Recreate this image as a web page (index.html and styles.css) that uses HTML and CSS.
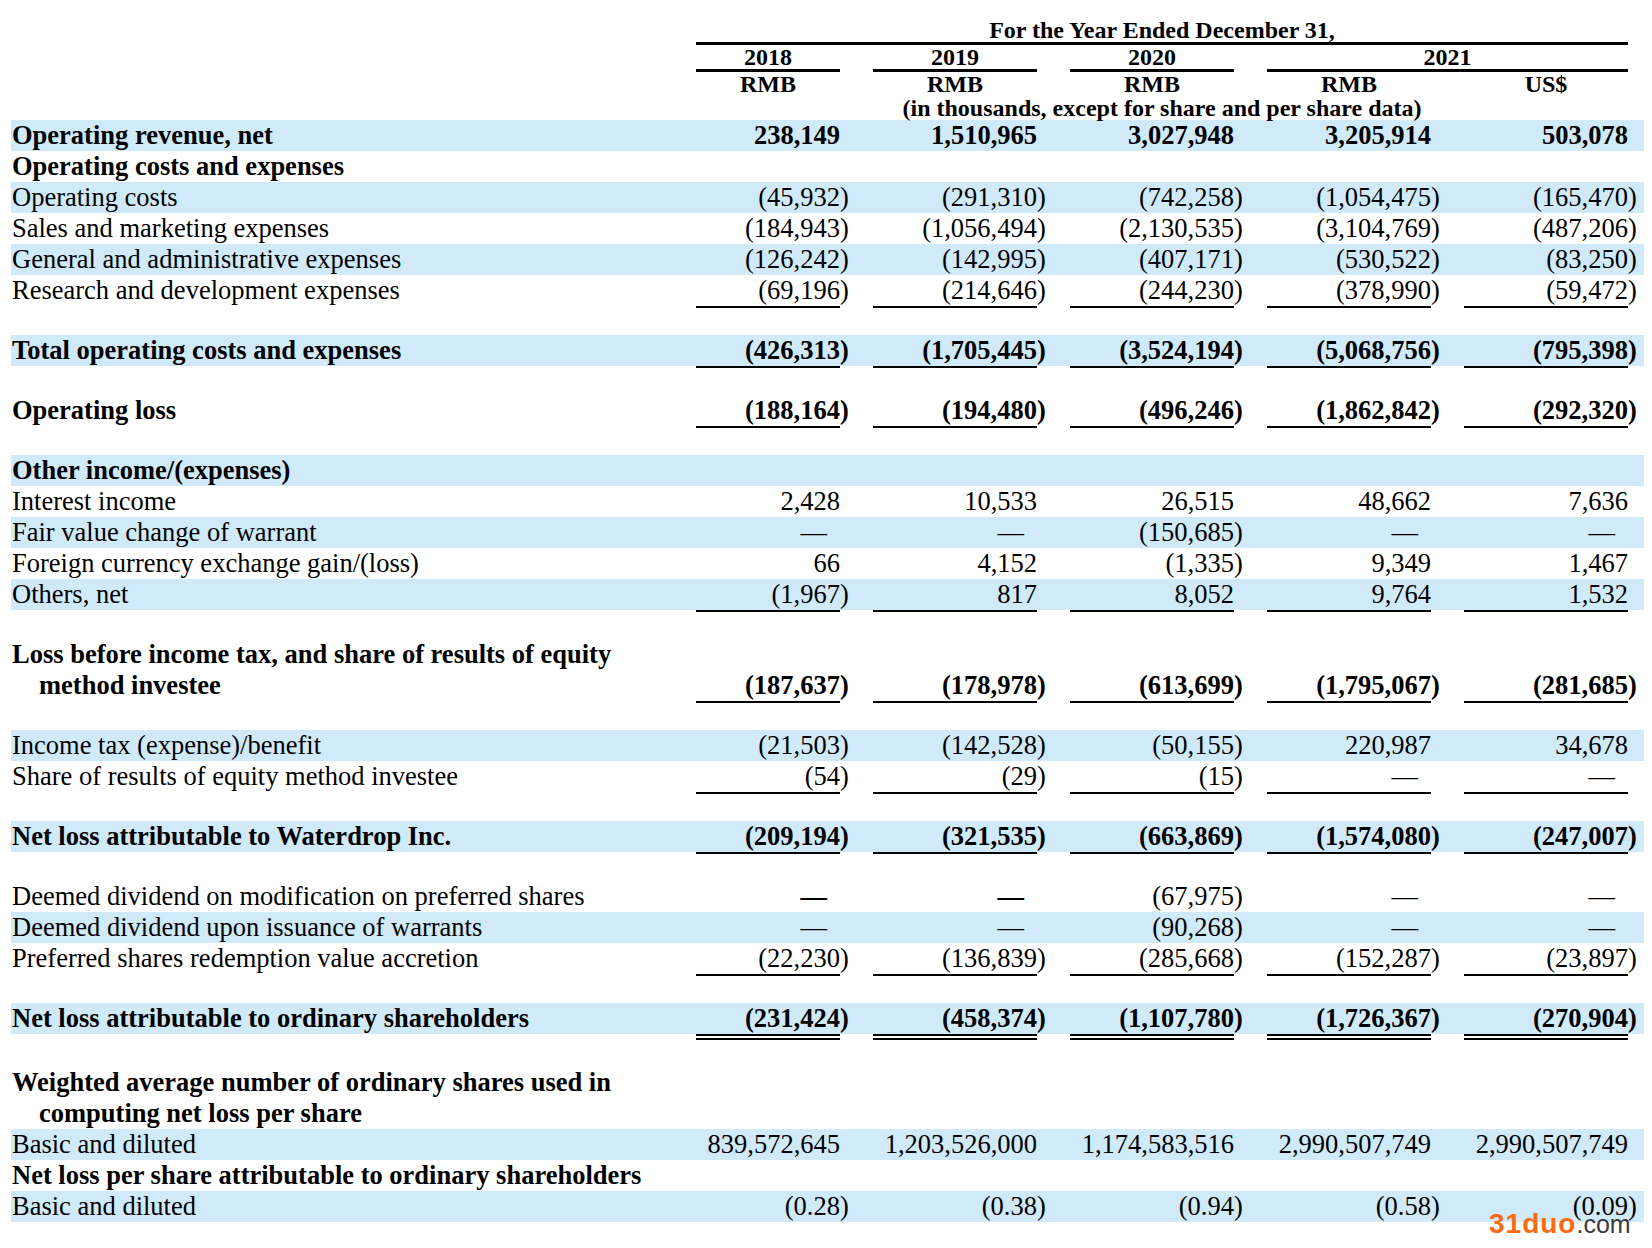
FILE: index.html
```html
<!DOCTYPE html>
<html>
<head>
<meta charset="utf-8">
<title>Statement of Operations</title>
<link rel="stylesheet" href="styles.css">
</head>
<body>
<div class="sheet">
  <div class="hd">
    <div class="hd-title">For the Year Ended December 31,</div>
    <div class="hd-year y1">2018</div>
    <div class="hd-year y2">2019</div>
    <div class="hd-year y3">2020</div>
    <div class="hd-year y45">2021</div>
    <div class="hd-cur k1">RMB</div>
    <div class="hd-cur k2">RMB</div>
    <div class="hd-cur k3">RMB</div>
    <div class="hd-cur k4">RMB</div>
    <div class="hd-cur k5">US$</div>
    <div class="hd-note">(in thousands, except for share and per share data)</div>
  </div>

  <div class="r blue b">
    <div class="lab">Operating revenue, net</div>
    <div class="v">238,149</div><div class="v">1,510,965</div><div class="v">3,027,948</div><div class="v">3,205,914</div><div class="v">503,078</div>
  </div>
  <div class="r b">
    <div class="lab">Operating costs and expenses</div>
    <div class="v"></div><div class="v"></div><div class="v"></div><div class="v"></div><div class="v"></div>
  </div>
  <div class="r blue">
    <div class="lab">Operating costs</div>
    <div class="v">(45,932<span class="cp">)</span></div><div class="v">(291,310<span class="cp">)</span></div><div class="v">(742,258<span class="cp">)</span></div><div class="v">(1,054,475<span class="cp">)</span></div><div class="v">(165,470<span class="cp">)</span></div>
  </div>
  <div class="r">
    <div class="lab">Sales and marketing expenses</div>
    <div class="v">(184,943<span class="cp">)</span></div><div class="v">(1,056,494<span class="cp">)</span></div><div class="v">(2,130,535<span class="cp">)</span></div><div class="v">(3,104,769<span class="cp">)</span></div><div class="v">(487,206<span class="cp">)</span></div>
  </div>
  <div class="r blue">
    <div class="lab">General and administrative expenses</div>
    <div class="v">(126,242<span class="cp">)</span></div><div class="v">(142,995<span class="cp">)</span></div><div class="v">(407,171<span class="cp">)</span></div><div class="v">(530,522<span class="cp">)</span></div><div class="v">(83,250<span class="cp">)</span></div>
  </div>
  <div class="r u">
    <div class="lab">Research and development expenses</div>
    <div class="v">(69,196<span class="cp">)</span></div><div class="v">(214,646<span class="cp">)</span></div><div class="v">(244,230<span class="cp">)</span></div><div class="v">(378,990<span class="cp">)</span></div><div class="v">(59,472<span class="cp">)</span></div>
  </div>
  <div class="sp"></div>
  <div class="r blue b u">
    <div class="lab">Total operating costs and expenses</div>
    <div class="v">(426,313<span class="cp">)</span></div><div class="v">(1,705,445<span class="cp">)</span></div><div class="v">(3,524,194<span class="cp">)</span></div><div class="v">(5,068,756<span class="cp">)</span></div><div class="v">(795,398<span class="cp">)</span></div>
  </div>
  <div class="sp"></div>
  <div class="r b u">
    <div class="lab">Operating loss</div>
    <div class="v">(188,164<span class="cp">)</span></div><div class="v">(194,480<span class="cp">)</span></div><div class="v">(496,246<span class="cp">)</span></div><div class="v">(1,862,842<span class="cp">)</span></div><div class="v">(292,320<span class="cp">)</span></div>
  </div>
  <div class="sp"></div>
  <div class="r blue b">
    <div class="lab">Other income/(expenses)</div>
    <div class="v"></div><div class="v"></div><div class="v"></div><div class="v"></div><div class="v"></div>
  </div>
  <div class="r">
    <div class="lab">Interest income</div>
    <div class="v">2,428</div><div class="v">10,533</div><div class="v">26,515</div><div class="v">48,662</div><div class="v">7,636</div>
  </div>
  <div class="r blue">
    <div class="lab">Fair value change of warrant</div>
    <div class="v"><span class="d">—</span></div><div class="v"><span class="d">—</span></div><div class="v">(150,685<span class="cp">)</span></div><div class="v"><span class="d">—</span></div><div class="v"><span class="d">—</span></div>
  </div>
  <div class="r">
    <div class="lab">Foreign currency exchange gain/(loss)</div>
    <div class="v">66</div><div class="v">4,152</div><div class="v">(1,335<span class="cp">)</span></div><div class="v">9,349</div><div class="v">1,467</div>
  </div>
  <div class="r blue u">
    <div class="lab">Others, net</div>
    <div class="v">(1,967<span class="cp">)</span></div><div class="v">817</div><div class="v">8,052</div><div class="v">9,764</div><div class="v">1,532</div>
  </div>
  <div class="sp"></div>
  <div class="r two b u">
    <div class="lab hang">Loss before income tax, and share of results of equity<br>method investee</div>
    <div class="v">(187,637<span class="cp">)</span></div><div class="v">(178,978<span class="cp">)</span></div><div class="v">(613,699<span class="cp">)</span></div><div class="v">(1,795,067<span class="cp">)</span></div><div class="v">(281,685<span class="cp">)</span></div>
  </div>
  <div class="sp"></div>
  <div class="r blue">
    <div class="lab">Income tax (expense)/benefit</div>
    <div class="v">(21,503<span class="cp">)</span></div><div class="v">(142,528<span class="cp">)</span></div><div class="v">(50,155<span class="cp">)</span></div><div class="v">220,987</div><div class="v">34,678</div>
  </div>
  <div class="r u">
    <div class="lab">Share of results of equity method investee</div>
    <div class="v">(54<span class="cp">)</span></div><div class="v">(29<span class="cp">)</span></div><div class="v">(15<span class="cp">)</span></div><div class="v"><span class="d">—</span></div><div class="v"><span class="d">—</span></div>
  </div>
  <div class="sp"></div>
  <div class="r blue b u">
    <div class="lab">Net loss attributable to Waterdrop Inc.</div>
    <div class="v">(209,194<span class="cp">)</span></div><div class="v">(321,535<span class="cp">)</span></div><div class="v">(663,869<span class="cp">)</span></div><div class="v">(1,574,080<span class="cp">)</span></div><div class="v">(247,007<span class="cp">)</span></div>
  </div>
  <div class="sp"></div>
  <div class="r">
    <div class="lab">Deemed dividend on modification on preferred shares</div>
    <div class="v"><span class="d db">—</span></div><div class="v"><span class="d db">—</span></div><div class="v">(67,975<span class="cp">)</span></div><div class="v"><span class="d">—</span></div><div class="v"><span class="d">—</span></div>
  </div>
  <div class="r blue">
    <div class="lab">Deemed dividend upon issuance of warrants</div>
    <div class="v"><span class="d">—</span></div><div class="v"><span class="d">—</span></div><div class="v">(90,268<span class="cp">)</span></div><div class="v"><span class="d">—</span></div><div class="v"><span class="d">—</span></div>
  </div>
  <div class="r u">
    <div class="lab">Preferred shares redemption value accretion</div>
    <div class="v">(22,230<span class="cp">)</span></div><div class="v">(136,839<span class="cp">)</span></div><div class="v">(285,668<span class="cp">)</span></div><div class="v">(152,287<span class="cp">)</span></div><div class="v">(23,897<span class="cp">)</span></div>
  </div>
  <div class="sp"></div>
  <div class="r blue b uu">
    <div class="lab">Net loss attributable to ordinary shareholders</div>
    <div class="v">(231,424<span class="cp">)</span></div><div class="v">(458,374<span class="cp">)</span></div><div class="v">(1,107,780<span class="cp">)</span></div><div class="v">(1,726,367<span class="cp">)</span></div><div class="v">(270,904<span class="cp">)</span></div>
  </div>
  <div class="sp last"></div>
  <div class="r two b">
    <div class="lab hang">Weighted average number of ordinary shares used in<br>computing net loss per share</div>
    <div class="v"></div><div class="v"></div><div class="v"></div><div class="v"></div><div class="v"></div>
  </div>
  <div class="r blue">
    <div class="lab">Basic and diluted</div>
    <div class="v">839,572,645</div><div class="v">1,203,526,000</div><div class="v">1,174,583,516</div><div class="v">2,990,507,749</div><div class="v">2,990,507,749</div>
  </div>
  <div class="r b">
    <div class="lab">Net loss per share attributable to ordinary shareholders</div>
    <div class="v"></div><div class="v"></div><div class="v"></div><div class="v"></div><div class="v"></div>
  </div>
  <div class="r blue">
    <div class="lab">Basic and diluted</div>
    <div class="v">(0.28<span class="cp">)</span></div><div class="v">(0.38<span class="cp">)</span></div><div class="v">(0.94<span class="cp">)</span></div><div class="v">(0.58<span class="cp">)</span></div><div class="v">(0.09<span class="cp">)</span></div>
  </div>
</div>
<div class="wm"><span class="wm-a">31duo</span><span class="wm-b">.com</span></div>
</body>
</html>
```

FILE: styles.css
```css
* {
  box-sizing: border-box;
  margin: 0;
  padding: 0;
}

html, body {
  background: #ffffff;
}

body {
  margin: 0;
  color: #000000;
  font-family: "Liberation Serif", "Times New Roman", serif;
  position: relative;
  min-height: 1248px;
}

.sheet {
  padding-left: 11px;
  width: 1644px;
}

.hd,
.r {
  display: grid;
  grid-template-columns: 652px 144px 164px 164px 164px 164px;
  column-gap: 33px;
  padding-right: 16px;
  width: 1633px;
}

/* ---------- header ---------- */
.hd {
  font-weight: bold;
  font-size: 24px;
  line-height: 24px;
  text-align: center;
}

.hd-title {
  grid-row: 1;
  grid-column: 2 / 7;
  padding-top: 18px;
  border-bottom: 3px solid #000;
  white-space: nowrap;
}

.hd-year {
  grid-row: 2;
  border-bottom: 3px solid #000;
}

.y1 { grid-column: 2; }
.y2 { grid-column: 3; }
.y3 { grid-column: 4; }
.y45 { grid-column: 5 / 7; }

.hd-cur {
  grid-row: 3;
}

.k1 { grid-column: 2; }
.k2 { grid-column: 3; }
.k3 { grid-column: 4; }
.k4 { grid-column: 5; }
.k5 { grid-column: 6; }

.hd-note {
  grid-row: 4;
  grid-column: 2 / 7;
  white-space: nowrap;
}

/* ---------- body rows ---------- */
.r {
  height: 31px;
  font-size: 26.5px;
  line-height: 31px;
}

.r.two {
  height: 62px;
}

.r.blue {
  background: #d0eafa;
}

.r.b {
  font-weight: bold;
}

.sp {
  height: 29px;
}

.sp.last {
  height: 33px;
}

.lab {
  padding-left: 1px;
  white-space: nowrap;
  text-align: left;
}

.lab.hang {
  padding-left: 28px;
  text-indent: -27px;
}

.v {
  text-align: right;
  white-space: nowrap;
  align-self: end;
  height: 31px;
}

.cp {
  margin-right: -0.333em;
}

.d {
  margin-right: 13px;
}

.d.db {
  font-weight: bold;
}

.r.u .v {
  box-shadow: 0 2px 0 #000;
}

.r.uu .v {
  box-shadow: 0 2px 0 #000, 0 4px 0 #fff, 0 6px 0 #000;
}

/* ---------- watermark overlay ---------- */
.wm {
  position: absolute;
  left: 1489px;
  top: 1210px;
  line-height: 28px;
  white-space: nowrap;
  font-family: "Liberation Sans", Arial, sans-serif;
}

.wm-a {
  font-size: 28px;
  font-weight: bold;
  color: #f86b12;
  letter-spacing: 1px;
}

.wm-b {
  font-size: 25px;
  color: #3a3a3a;
}
```
